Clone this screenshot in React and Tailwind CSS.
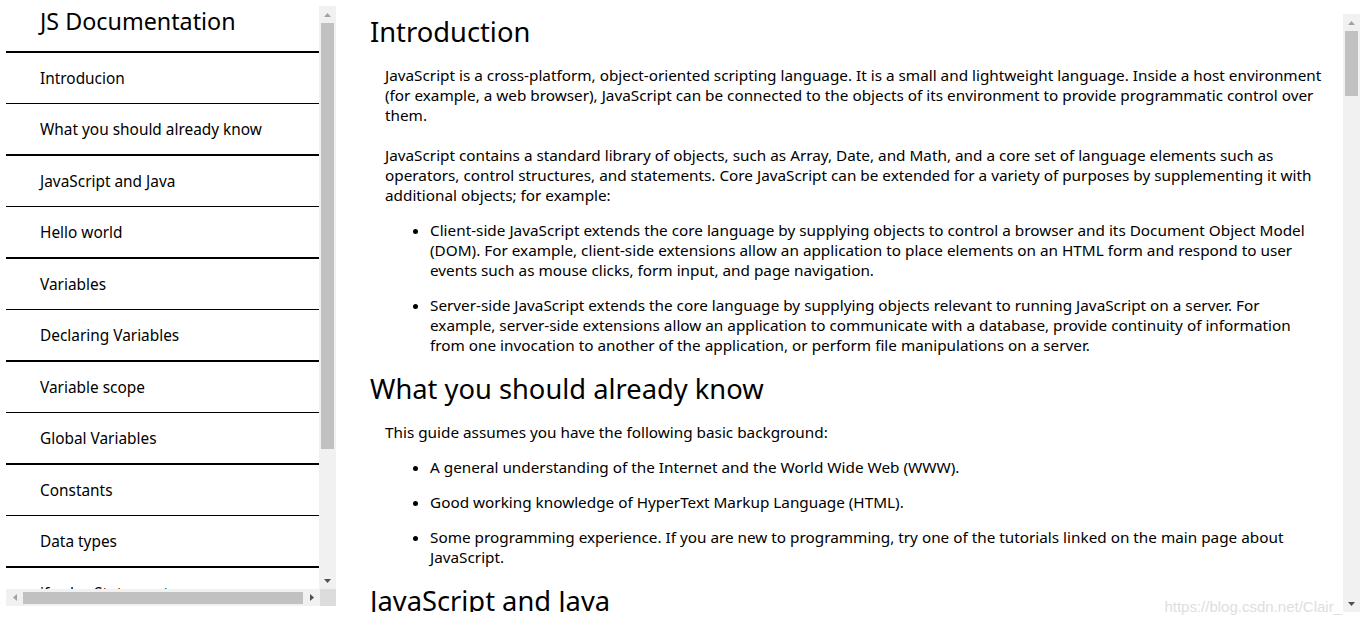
const navItems = [
  'Introducion',
  'What you should already know',
  'JavaScript and Java',
  'Hello world',
  'Variables',
  'Declaring Variables',
  'Variable scope',
  'Global Variables',
  'Constants',
  'Data types',
  'if...else Statement',
];

function ArrowUp({ dark }) {
  return (
    <svg width="7" height="4" viewBox="0 0 7 4">
      <path d="M0 4 L3.5 0 L7 4 Z" fill={dark ? '#505050' : '#a3a3a3'} />
    </svg>
  );
}

function ArrowDown({ dark }) {
  return (
    <svg width="7" height="4" viewBox="0 0 7 4">
      <path d="M0 0 L7 0 L3.5 4 Z" fill={dark ? '#505050' : '#a3a3a3'} />
    </svg>
  );
}

function ArrowLeft({ dark }) {
  return (
    <svg width="4" height="7" viewBox="0 0 4 7">
      <path d="M4 0 L4 7 L0 3.5 Z" fill={dark ? '#505050' : '#a3a3a3'} />
    </svg>
  );
}

function ArrowRight({ dark }) {
  return (
    <svg width="4" height="7" viewBox="0 0 4 7">
      <path d="M0 0 L4 3.5 L0 7 Z" fill={dark ? '#505050' : '#a3a3a3'} />
    </svg>
  );
}

function VScroll({ thumbTop, thumbHeight }) {
  return (
    <div className="w-[17px] h-full bg-[#f1f1f1] flex flex-col items-center">
      <div className="h-[17px] w-full flex items-center justify-center">
        <ArrowUp />
      </div>
      <div className="flex-1 w-full px-[2px]">
        <div className="w-full bg-[#c1c1c1]" style={{ marginTop: thumbTop, height: thumbHeight }} />
      </div>
      <div className="h-[17px] w-full flex items-center justify-center">
        <ArrowDown dark />
      </div>
    </div>
  );
}

export default function App() {
  const font = { fontFamily: '"Noto Sans", "Open Sans", sans-serif' };

  return (
    <div className="w-[1366px] h-[624px] bg-white flex overflow-hidden text-black" style={font}>
      {/* サイドナビ */}
      <nav className="ml-[6px] mt-[6px] w-[330px] h-[600px] flex flex-col">
        <div className="flex flex-1 min-h-0">
          <div className="w-[314px] overflow-hidden">
            <div className="h-[45px] pl-[34px] text-[23.3px] leading-[30px]">JS Documentation</div>
            {navItems.map((item, i) => (
              <div
                key={item}
                className={`${i % 2 === 0 ? 'border-t-2 h-[52px]' : 'border-t h-[51px]'} border-black pl-[34px] pt-[2px] flex items-center text-[15.4px] whitespace-nowrap`}
              >
                {item}
              </div>
            ))}
          </div>
          <VScroll thumbTop={0} thumbHeight={426} />
        </div>
        <div className="h-[17px] flex">
          <div className="w-[314px] bg-[#f1f1f1] flex items-center">
            <div className="w-[17px] flex justify-center"><ArrowLeft /></div>
            <div className="flex-1 h-[12px] bg-[#c1c1c1]" />
            <div className="w-[17px] flex justify-center"><ArrowRight dark /></div>
          </div>
          <div className="w-[16px] bg-[#dcdcdc]" />
        </div>
      </nav>

      {/* メインコンテンツ */}
      <main className="ml-[10px] mt-[14px] w-[1014px] h-[598px] flex">
        <div className="flex-1 pl-[24px] pr-[17px] overflow-hidden text-[15.3px] leading-[20px]">
          <h2 className="text-[27.3px] leading-[36px]">Introduction</h2>
          <div className="pl-[15px] mt-[15px]">
            <p>
              JavaScript is a cross-platform, object-oriented scripting language. It is a small and lightweight language. Inside a host environment (for example, a web browser), JavaScript can be connected to the objects of its environment to provide programmatic control over them.
            </p>
            <p className="mt-[20px]">
              JavaScript contains a standard library of objects, such as Array, Date, and Math, and a core set of language elements such as operators, control structures, and statements. Core JavaScript can be extended for a variety of purposes by supplementing it with additional objects; for example:
            </p>
            <ul className="list-disc pl-[45px] mt-[15px] flex flex-col gap-[15px]">
              <li>
                Client-side JavaScript extends the core language by supplying objects to control a browser and its Document Object Model (DOM). For example, client-side extensions allow an application to place elements on an HTML form and respond to user events such as mouse clicks, form input, and page navigation.
              </li>
              <li>
                Server-side JavaScript extends the core language by supplying objects relevant to running JavaScript on a server. For example, server-side extensions allow an application to communicate with a database, provide continuity of information from one invocation to another of the application, or perform file manipulations on a server.
              </li>
            </ul>
          </div>

          <h2 className="text-[27.3px] leading-[36px] mt-[16px]">What you should already know</h2>
          <div className="pl-[15px] mt-[15px]">
            <p>This guide assumes you have the following basic background:</p>
            <ul className="list-disc pl-[45px] mt-[15px] flex flex-col gap-[15px]">
              <li>A general understanding of the Internet and the World Wide Web (WWW).</li>
              <li>Good working knowledge of HyperText Markup Language (HTML).</li>
              <li>
                Some programming experience. If you are new to programming, try one of the tutorials linked on the main page about JavaScript.
              </li>
            </ul>
          </div>

          <h2 className="text-[27.3px] leading-[36px] mt-[16px]">JavaScript and Java</h2>
        </div>
        <div className="relative">
          <VScroll thumbTop={0} thumbHeight={65} />
          <div
            className="absolute right-[18px] top-[582px] whitespace-nowrap text-[15px] text-[#dedede]"
            style={{ fontFamily: '"Liberation Sans", Arial, sans-serif' }}
          >
            https://blog.csdn.net/Clair_
          </div>
        </div>
      </main>
    </div>
  );
}
